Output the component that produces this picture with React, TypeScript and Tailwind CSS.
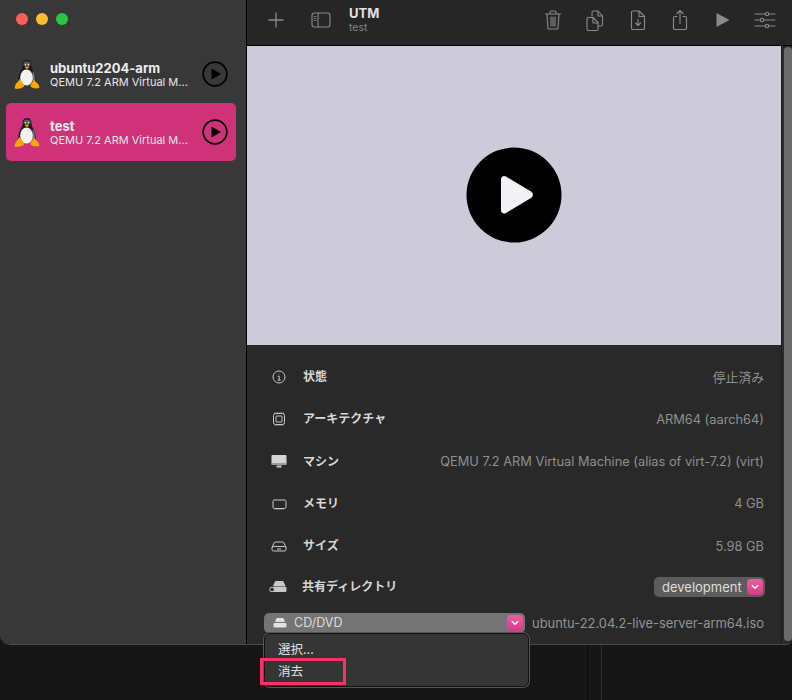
const font = { fontFamily: '"Inter", "Noto Sans CJK JP", sans-serif' }

function Tux() {
  return (
    <svg width="26" height="29" viewBox="0 0 26 29">
      <path d="M13 0C10 0 8.500 2 8.500 5c0 2.500-.5 3.500-2 6C5 14 4 17 4.500 21.500h17c.5-4.500-.5-7.500-2-10.500-1.500-2.500-2-3.500-2-6 0-3-1.500-5-4.500-5z" fill="#1c1c1c" />
      <path d="M10 2.500c1.500-1.500 4.500-1.500 6 0 .5 1 .6 2 .5 3h-7c-.1-1 0-2 .5-3z" fill="#5a5a5a" />
      <path d="M19 11c2 3 2.500 7 1.500 11l-3-1c.5-3 .5-7 1.500-10z" fill="#707070" />
      <ellipse cx="12.500" cy="17.500" rx="6.300" ry="8" fill="#f2f2f2" />
      <ellipse cx="11.500" cy="4.800" rx="0.800" ry="1.100" fill="#d0d0d0" />
      <ellipse cx="14.500" cy="4.800" rx="0.800" ry="1.100" fill="#d0d0d0" />
      <path d="M10.500 7l2.500-.8 2.500.8-2.500 2.200z" fill="#f0a400" />
      <path d="M6 18.500c.8 2 2.500 4.500 4 6.500.7 1-.3 2-2 2.800-2 .9-5 1.200-7.500.7.300-1.500.8-3.500 1.500-5 1.500-1 2.800-3 4-5z" fill="#f8a800" />
      <path d="M20 19.500c-1 2-2.500 3.500-3.500 5.500-.5 1 .5 2 2 2.800 2 .8 5 .7 7 .2-.3-1.500-.8-3.500-1.800-4.500-1.200-.8-2.700-2-3.700-4z" fill="#f8a800" />
    </svg>
  )
}

function RoundPlay() {
  return (
    <svg width="26" height="26" viewBox="0 0 26 26" className="shrink-0">
      <circle cx="13" cy="13" r="11.800" fill="none" stroke="#000" strokeWidth="1.700" />
      <path d="M9.500 7.500v11l9.500-5.500z" fill="#000" />
    </svg>
  )
}

function VmRow({ name, selected }: { name: string; selected?: boolean }) {
  return (
    <div className={`flex h-[58px] items-center rounded-[5px] pl-[8px] pr-[8px] ${selected ? 'bg-[#cf3278]' : ''}`}>
      <div className="flex w-[36px] shrink-0 justify-start">
        <Tux />
      </div>
      <div className="min-w-0 flex-1">
        <div className="text-[13px] leading-[16px] font-bold text-[#eeeeee]">{name}</div>
        <div className="text-[11px] leading-[13px] whitespace-nowrap text-[#e6e6e6]">QEMU 7.2 ARM Virtual M...</div>
      </div>
      <RoundPlay />
    </div>
  )
}

function ToolIcon({ children }: { children: React.ReactNode }) {
  return (
    <svg width="24" height="24" viewBox="0 0 24 24" fill="none" stroke="#8a8a8a" strokeWidth="1.100" strokeLinejoin="round" strokeLinecap="round">
      {children}
    </svg>
  )
}

function Info({ icon, label, value }: { icon: React.ReactNode; label: string; value: string }) {
  return (
    <div className="flex h-[42.3px] items-center pl-[22px] pr-[17px]">
      <div className="flex w-[20px] justify-center">{icon}</div>
      <div className="ml-[14px] text-[12px] font-bold text-[#d6d6d6]">{label}</div>
      <div className="ml-auto text-[12.8px] text-[#8f8f8f]">{value}</div>
    </div>
  )
}

function Chevron() {
  return (
    <span className="flex h-[16px] w-[16px] items-center justify-center rounded-[4px] bg-gradient-to-b from-[#ee5da0] to-[#d63a85]">
      <svg width="8" height="6" viewBox="0 0 8 6" fill="none" stroke="#fff" strokeWidth="1.400" strokeLinecap="round" strokeLinejoin="round">
        <path d="M1.200 1.500L4 4.300l2.800-2.800" />
      </svg>
    </span>
  )
}

const sm = { fill: 'none', stroke: '#c8c8c8', strokeWidth: 1 }

export default function App() {
  return (
    <div className="relative h-[700px] w-[792px] overflow-hidden bg-[#161616]" style={font}>
      <div className="absolute left-[587px] top-[644px] h-[56px] w-px bg-[#0a0a0a]" />
      <div className="absolute left-[601px] top-[644px] h-[56px] w-px bg-[#2c2c2c]" />

      <div className="relative flex h-[645px] w-[792px] overflow-hidden rounded-br-[6px] rounded-bl-[10px] border-b border-[#4a4a4a]">
        {/* sidebar */}
        <aside className="h-full w-[246px] shrink-0 bg-[#383838] pr-[10px] pl-[6px]">
          <div className="flex h-[45px] items-center gap-[8px] pb-[7px] pl-[10px]">
            <span className="h-[12px] w-[12px] rounded-full bg-[#fc5f57]" />
            <span className="h-[12px] w-[12px] rounded-full bg-[#fdbc2e]" />
            <span className="h-[12px] w-[12px] rounded-full bg-[#28c83f]" />
          </div>
          <div className="flex flex-col">
            <VmRow name="ubuntu2204-arm" />
            <VmRow name="test" selected />
          </div>
        </aside>
        <div className="w-px shrink-0 bg-black" />

        {/* main */}
        <main className="flex min-w-0 flex-1 flex-col bg-[#292929]">
          <header className="flex h-[46px] shrink-0 items-center border-b border-black bg-[#262626] pr-[15px] pb-[6px] pl-[17px]">
            <ToolIcon>
              <path d="M12 5v14M5 12h14" strokeWidth="1.300" />
            </ToolIcon>
            <div className="ml-[21px] flex">
              <ToolIcon>
                <rect x="3" y="5" width="18" height="14" rx="2.500" />
                <path d="M9 5v14" />
                <path d="M5 8.500h2M5 10.500h2M5 12.500h2" strokeWidth="0.800" />
              </ToolIcon>
            </div>
            <div className="ml-[16px]">
              <div className="text-[13px] leading-[16px] font-bold text-[#e2e2e2]">UTM</div>
              <div className="text-[10.500px] leading-[13px] text-[#858585]">test</div>
            </div>
            <div className="ml-auto flex items-center gap-[18.4px]">
              <ToolIcon>
                <path d="M4.500 6h15M9 6V4.500c0-.8.500-1.500 1.300-1.500h3.400c.8 0 1.300.7 1.300 1.500V6M6 6l1 14c0 .6.500 1 1 1h8c.5 0 1-.4 1-1l1-14M10 9v9M12 9v9M14 9v9" />
              </ToolIcon>
              <ToolIcon>
                <path d="M9 8V4.500c0-.8.500-1.500 1.300-1.500H15l4.500 5v8.500c0 .8-.5 1.500-1.300 1.500H15M15 3v5h4.500" />
                <path d="M4 11c0-.8.500-1.500 1.300-1.500H10l5 5v6.500c0 .8-.5 1.500-1.300 1.500H5.300C4.500 22.500 4 21.800 4 21zM10 9.500V15h5" />
              </ToolIcon>
              <ToolIcon>
                <path d="M5.500 4.500C5.500 3.700 6 3 6.800 3H13l5.500 5.500v11.700c0 .8-.5 1.300-1.300 1.300H6.800c-.8 0-1.300-.5-1.300-1.300zM13 3v5.500h5.500M12 11v6.500M9.500 15l2.500 2.500 2.500-2.500" />
              </ToolIcon>
              <ToolIcon>
                <path d="M9 8.500H6.800c-.8 0-1.300.5-1.300 1.300v10.400c0 .8.500 1.300 1.300 1.300h10.400c.8 0 1.300-.5 1.300-1.300V9.800c0-.8-.5-1.300-1.300-1.300H15M12 15.500V2.500M9 5.500l3-3 3 3" />
              </ToolIcon>
              <svg width="24" height="24" viewBox="0 0 24 24">
                <path d="M5.500 5v14l13-7z" fill="#8a8a8a" />
              </svg>
              <ToolIcon>
                <path d="M2 6h20M2 12h20M2 18h20" strokeWidth="1" />
                <circle cx="14" cy="6" r="1.700" fill="#262626" />
                <circle cx="9" cy="12" r="1.700" fill="#262626" />
                <circle cx="14" cy="18" r="1.700" fill="#262626" />
              </ToolIcon>
            </div>
          </header>

          <div className="flex min-h-0 flex-1">
            <div className="flex min-w-0 flex-1 flex-col">
              <div className="flex h-[299px] shrink-0 items-center justify-center bg-[#cdcad9] pb-[1px]">
                <svg width="96" height="96" viewBox="0 0 96 96">
                  <circle cx="48" cy="48" r="47.500" fill="#000" />
                  <path d="M35 32.500c0-3 2.500-4.500 5-3l25 15c2.500 1.500 2.500 5 0 6.500l-25 15c-2.500 1.400-5-.2-5-3z" fill="#f4f2f7" />
                </svg>
              </div>

              <div className="flex flex-col pt-[11px]">
                <Info
                  label="状態"
                  value="停止済み"
                  icon={
                    <svg width="14" height="14" viewBox="0 0 14 14" {...sm}>
                      <circle cx="7" cy="7" r="6" />
                      <path d="M5.800 6.300H7.200V10M5.600 10.200h3M7 3.800v.6" />
                    </svg>
                  }
                />
                <Info
                  label="アーキテクチャ"
                  value="ARM64 (aarch64)"
                  icon={
                    <svg width="14" height="14" viewBox="0 0 14 14" {...sm}>
                      <rect x="1.500" y="1.500" width="11" height="11" rx="2" />
                      <rect x="4" y="4" width="6" height="6" rx="0.500" />
                      <path d="M3 0v1.500M5 0v1.500M7 0v1.500M9 0v1.500M11 0v1.500M3 12.500V14M5 12.500V14M7 12.500V14M9 12.500V14M11 12.500V14" strokeWidth="0.600" />
                    </svg>
                  }
                />
                <Info
                  label="マシン"
                  value="QEMU 7.2 ARM Virtual Machine (alias of virt-7.2) (virt)"
                  icon={
                    <svg width="16" height="13" viewBox="0 0 16 13">
                      <rect x="0.500" y="0" width="15" height="9.500" rx="1" fill="#d4d4d4" />
                      <rect x="0.500" y="8" width="15" height="2" fill="#9a9a9a" />
                      <path d="M5.500 10.500h5v2h-5z" fill="#c8c8c8" />
                    </svg>
                  }
                />
                <Info
                  label="メモリ"
                  value="4 GB"
                  icon={
                    <svg width="15" height="11" viewBox="0 0 15 11" {...sm}>
                      <rect x="1" y="1" width="13" height="8.500" rx="1.500" />
                      <path d="M3 9.500v1.500M5 9.500v1.500M7 9.500v1.500M9 9.500v1.500M11 9.500v1.500M3 0v1M12 0v1" strokeWidth="0.600" />
                    </svg>
                  }
                />
                <Info
                  label="サイズ"
                  value="5.98 GB"
                  icon={
                    <svg width="16" height="11" viewBox="0 0 16 11" {...sm}>
                      <path d="M1 6.500L3 2c.3-.7.800-1 1.500-1h7c.7 0 1.200.3 1.500 1l2 4.500" />
                      <rect x="1" y="5.500" width="14" height="4.500" rx="1.500" />
                      <path d="M6 8h4" strokeWidth="1" />
                    </svg>
                  }
                />
                <div className="flex h-[40px] items-center pr-[16px] pl-[21px]">
                  <div className="flex w-[20px] justify-center">
                    <svg width="18" height="12" viewBox="0 0 18 12">
                      <path d="M4 5l1.800-4c.2-.6.600-1 1.200-1h6.500c.6 0 1 .4 1.200 1L16.500 5z" fill="#c8c8c8" />
                      <rect x="3.500" y="5.500" width="14" height="5.500" rx="1.500" fill="#c8c8c8" />
                      <circle cx="3" cy="8.500" r="2.300" fill="#292929" stroke="#c8c8c8" strokeWidth="1" />
                    </svg>
                  </div>
                  <div className="ml-[14px] text-[12px] font-bold text-[#d6d6d6]">共有ディレクトリ</div>
                  <div className="ml-auto flex h-[20px] w-[111px] items-center justify-between rounded-[5px] bg-[#5c5c5c] pr-[2px] pl-[8px] text-[13px] text-[#dedede]">
                    development
                    <Chevron />
                  </div>
                </div>
                <div className="flex h-[32px] items-center pr-[17px] pl-[17px]">
                  <div className="flex h-[20px] w-[261px] items-center rounded-[5px] bg-[#747474] pr-[2px] pl-[9px] text-[12.500px] text-[#dcdcdc]">
                    <svg width="14" height="10" viewBox="0 0 14 10" className="mr-[7px]">
                      <path d="M2 4l1-2.800C3.300.5 3.700 0 4.500 0h5c.8 0 1.200.5 1.500 1.200L12 4z" fill="#e2e2e2" />
                      <rect x="0.500" y="5" width="13" height="4.500" rx="1.200" fill="#e2e2e2" />
                    </svg>
                    CD/DVD
                    <span className="ml-auto">
                      <Chevron />
                    </span>
                  </div>
                  <div className="ml-auto text-[12.9px] whitespace-nowrap text-[#939393]">ubuntu-22.04.2-live-server-arm64.iso</div>
                </div>
              </div>
            </div>

            {/* scrollbar */}
            <div className="w-[11px] shrink-0 border-l border-[#1c1c1c] bg-[#2b2b2b] pt-[1px] pb-[3px] pl-[2px]">
              <div className="h-full w-[8px] rounded-[4px] bg-[#6b6b6b]" />
            </div>
          </div>
        </main>
      </div>

      {/* dropdown menu */}
      <div className="absolute top-[633px] left-[264px] flex h-[54px] w-[265px] flex-col rounded-[6px] border border-[#111] bg-[#353535] py-[4px] pl-[13px] text-[12.500px] text-[#e0e0e0] shadow-[0_0_0_1px_#555]">
        <div className="h-[22px] leading-[24px]">選択...</div>
        <div className="h-[22px] leading-[24px]">消去</div>
      </div>
      {/* annotation */}
      <div className="absolute top-[658px] left-[260px] h-[27px] w-[86px] border-[3px] border-[#fb3069]" />
    </div>
  )
}
